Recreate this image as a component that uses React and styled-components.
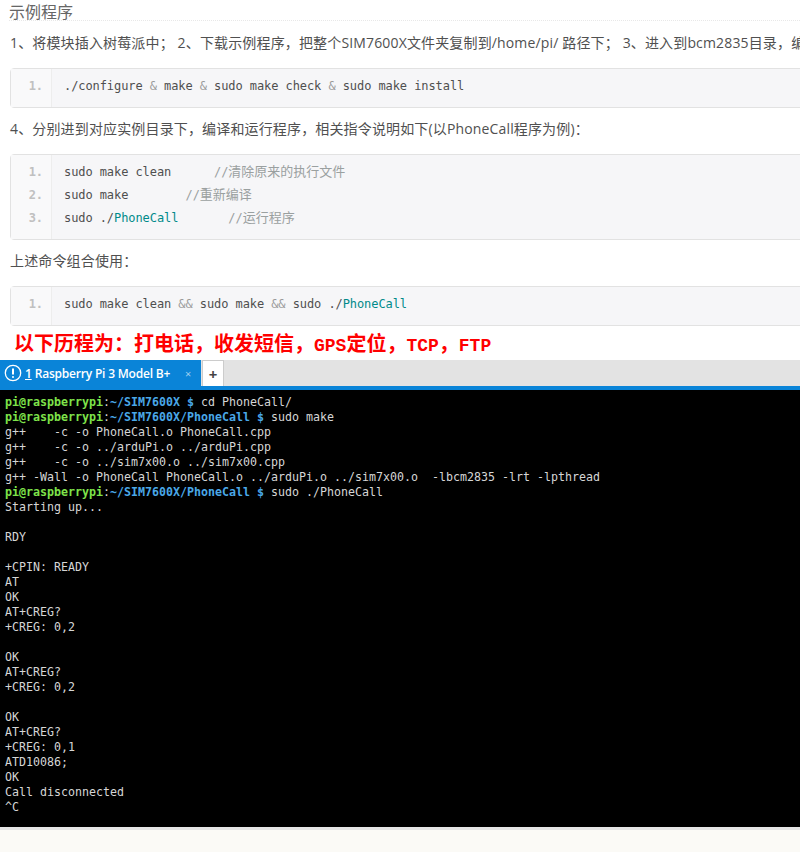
import React from "react";
import styled, { createGlobalStyle } from "styled-components";

const GlobalStyle = createGlobalStyle`
  html, body {
    margin: 0;
    padding: 0;
    background: #fff;
    overflow: hidden;
  }
`;

const Page = styled.div`
  width: 800px;
  height: 852px;
  overflow: hidden;
  display: flex;
  flex-direction: column;
  font-family: "Open Sans", "Noto Sans CJK SC", sans-serif;
  color: #555;
`;

const Article = styled.div`
  height: 360px;
  flex: none;
  padding-left: 10px;
  overflow: hidden;
`;

const Heading = styled.div`
  height: 21px;
  box-sizing: border-box;
  font-size: 16px;
  line-height: 24px;
  margin-left: -1px;
  color: #666;
  border-bottom: 1px dotted #e8e8e8;
  white-space: nowrap;
`;

const Para = styled.p`
  margin: 0;
  height: ${(p) => p.$h}px;
  line-height: ${(p) => p.$lh}px;
  font-size: 14px;
  letter-spacing: 0.15px;
  color: #505050;
  white-space: nowrap;
`;

const Code = styled.div`
  display: flex;
  width: 900px;
  box-sizing: border-box;
  background: #f6f6f8;
  border: 1px solid #e2e2e2;
  border-radius: 4px;
  font-family: "DejaVu Sans Mono", monospace;
  font-size: 12px;
  letter-spacing: -0.08px;
  color: #4f4f4f;
`;

const Gutter = styled.div`
  width: 41px;
  flex: none;
  box-sizing: border-box;
  border-right: 1px solid #ededed;
  background: #f9f9fa;
  padding: 6px 8px 0 0;
  text-align: right;
  color: #c0c0c0;
  font-weight: bold;
`;

const Lines = styled.div`
  padding: 6px 0 0 12px;
  white-space: pre;
`;

const Line = styled.div`
  height: ${(p) => p.$h || 23}px;
  line-height: 23px;
`;

const Op = styled.span`
  color: #9a9a9a;
`;

const Teal = styled.span`
  color: #008a8a;
`;

const Comment = styled.span`
  color: #9aa0a0;
`;

const CommentText = styled.span`
  font-family: "Noto Sans CJK SC", sans-serif;
  font-size: 13px;
  line-height: 1;
  letter-spacing: 0;
`;

const Notice = styled.div`
  height: 33px;
  padding-left: 4px;
  line-height: 33px;
  font-family: "Noto Sans CJK SC", serif;
  font-size: 20px;
  font-weight: bold;
  color: #f00;
  white-space: nowrap;
`;

const NoticeLatin = styled.span`
  font-family: "Liberation Mono", monospace;
  font-size: 18px;
`;

const TabBar = styled.div`
  height: 30px;
  flex: none;
  box-sizing: border-box;
  display: flex;
  background: #e3e3e3;
  border-bottom: 4px solid #0a84d8;
`;

const ActiveTab = styled.div`
  width: 201px;
  height: 30px;
  box-sizing: border-box;
  background: #0a84d8;
  color: #fff;
  display: flex;
  align-items: center;
  padding: 0 0 4px 4px;
  font-size: 12px;
  font-weight: 600;
  letter-spacing: -0.2px;
`;

const TabNum = styled.span`
  text-decoration: underline;
  margin: 0 3px 0 3px;
`;

const TabClose = styled.span`
  margin-left: auto;
  margin-right: 10px;
  font-size: 11px;
  font-weight: 400;
  color: #9fd0f0;
`;

const AddTab = styled.div`
  width: 22px;
  height: 26px;
  margin-left: 1px;
  box-sizing: border-box;
  background: #fff;
  border: 1px solid #ccc;
  border-bottom: none;
  display: flex;
  align-items: center;
  justify-content: center;
  font-size: 15px;
  font-weight: bold;
  color: #444;
`;

const Terminal = styled.pre`
  margin: 0;
  height: 437px;
  flex: none;
  box-sizing: border-box;
  padding: 5px 0 0 5px;
  background: #000;
  color: #d6d6d6;
  font-family: "DejaVu Sans Mono", monospace;
  font-size: 11.63px;
  line-height: 15px;
  overflow: hidden;
`;

const User = styled.b`
  color: #7ee34a;
`;

const Dir = styled.b`
  color: #4aa8e8;
`;

const Divider = styled.div`
  height: 3px;
  flex: none;
  background: #e6e6e6;
`;

const Footer = styled.div`
  flex: 1;
  background: #fbfaf6;
`;

const Prompt = ({ path, cmd }) => (
  <>
    <User>pi@raspberrypi</User>:<Dir>{path} $</Dir> {cmd}
    {"\n"}
  </>
);

const Block = ({ nums, children }) => (
  <Code>
    <Gutter>
      {nums.map((n) => (
        <Line key={n}>{n}.</Line>
      ))}
    </Gutter>
    <Lines>{children}</Lines>
  </Code>
);

const App = () => (
  <Page>
    <GlobalStyle />
    <Article>
      <Heading>示例程序</Heading>
      <Para $h={47} $lh={44}>
        1、将模块插入树莓派中； 2、下载示例程序，把整个SIM7600X文件夹复制到/home/pi/ 路径下； 3、进入到bcm2835目录，编译安装BCM2835库：
      </Para>
      <Block nums={[1]}>
        <Line $h={32}>
          ./configure <Op>&amp;</Op> make <Op>&amp;</Op> sudo make check <Op>&amp;</Op> sudo make install
        </Line>
      </Block>
      <Para $h={46} $lh={42}>
        4、分别进到对应实例目录下，编译和运行程序，相关指令说明如下(以PhoneCall程序为例)：
      </Para>
      <Block nums={[1, 2, 3]}>
        <Line>
          sudo make clean{"      "}
          <Comment>
            //<CommentText>清除原来的执行文件</CommentText>
          </Comment>
        </Line>
        <Line>
          sudo make{"        "}
          <Comment>
            //<CommentText>重新编译</CommentText>
          </Comment>
        </Line>
        <Line>
          sudo ./<Teal>PhoneCall</Teal>
          {"       "}
          <Comment>
            //<CommentText>运行程序</CommentText>
          </Comment>
        </Line>
        <Line $h={9} />
      </Block>
      <Para $h={46} $lh={42}>
        上述命令组合使用：
      </Para>
      <Block nums={[1]}>
        <Line $h={32}>
          sudo make clean <Op>&amp;&amp;</Op> sudo make <Op>&amp;&amp;</Op> sudo ./<Teal>PhoneCall</Teal>
        </Line>
      </Block>
      <Notice>
        以下历程为：打电话，收发短信，<NoticeLatin>GPS</NoticeLatin>定位，<NoticeLatin>TCP</NoticeLatin>，
        <NoticeLatin>FTP</NoticeLatin>
      </Notice>
    </Article>
    <TabBar>
      <ActiveTab>
        <svg width="18" height="18" viewBox="0 0 18 18" aria-hidden="true">
          <circle cx="9" cy="9" r="7.7" fill="none" stroke="#fff" strokeWidth="1.3" />
          <path d="M9 4.5v6M9 12.2v1.6" stroke="#fff" strokeWidth="2" fill="none" />
        </svg>
        <TabNum>1</TabNum>
        Raspberry Pi 3 Model B+
        <TabClose>×</TabClose>
      </ActiveTab>
      <AddTab>+</AddTab>
    </TabBar>
    <Terminal>
      <Prompt path="~/SIM7600X" cmd="cd PhoneCall/" />
      <Prompt path="~/SIM7600X/PhoneCall" cmd="sudo make" />
      {`g++    -c -o PhoneCall.o PhoneCall.cpp
g++    -c -o ../arduPi.o ../arduPi.cpp
g++    -c -o ../sim7x00.o ../sim7x00.cpp
g++ -Wall -o PhoneCall PhoneCall.o ../arduPi.o ../sim7x00.o  -lbcm2835 -lrt -lpthread
`}
      <Prompt path="~/SIM7600X/PhoneCall" cmd="sudo ./PhoneCall" />
      {`Starting up...

RDY

+CPIN: READY
AT
OK
AT+CREG?
+CREG: 0,2

OK
AT+CREG?
+CREG: 0,2

OK
AT+CREG?
+CREG: 0,1
ATD10086;
OK
Call disconnected
^C`}
    </Terminal>
    <Divider />
    <Footer />
  </Page>
);

export default App;
